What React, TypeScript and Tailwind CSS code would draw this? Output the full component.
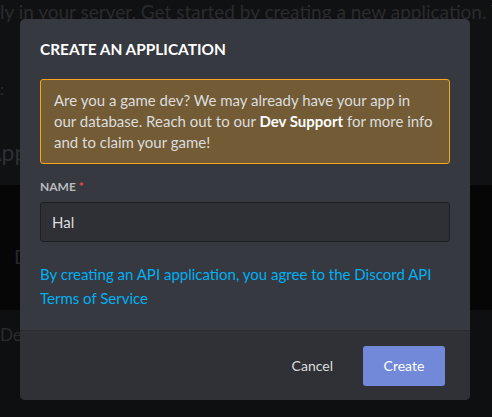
export default function App() {
  return (
    <div
      className="relative h-[417px] w-[492px] overflow-hidden bg-[#0c0d0f]"
      style={{ fontFamily: 'Lato, "Noto Sans", sans-serif' }}
    >
      {/* dimmed page behind the modal */}
      <div className="absolute inset-0 flex flex-col text-[#2a2b2e]">
        <div className="h-[185px] bg-[#101113]">
          <p className="-mt-[2px] whitespace-nowrap text-[19px]">
            ly in your server. Get started by creating a new application. T
          </p>
          <p className="mt-[50px] text-[16px]">:</p>
          <p className="-ml-[14px] mt-[34px] text-[23px] text-[#2e2f33]">App</p>
        </div>
        <div className="h-[125px] bg-[#060606] pl-[14px] pt-[56px] text-[20px] text-[#26272a]">D</div>
        <div className="flex-1 bg-[#0e0f11] pt-[12px] text-[17px] text-[#2a2b2e]">Del</div>
      </div>

      {/* modal */}
      <div className="absolute left-[20px] top-[19px] flex w-[450px] flex-col overflow-hidden rounded-[5px] bg-[#36393f]">
        <div className="flex flex-col px-[20px] pb-[20px] pt-[20px]">
          <h2 className="text-[15.4px] font-bold uppercase leading-[20px] text-white">
            Create an Application
          </h2>
          <div className="mt-[20px] rounded-[3px] border border-[#faa61a] bg-[#725b35] px-[13px] pb-[10px] pt-[10px] text-[15px] leading-[21px] text-[#dcddde]">
            Are you a game dev? We may already have your app in our database. Reach out to our{' '}
            <span className="font-bold text-white">Dev Support</span> for more info and to claim your game!
          </div>
          <label className="mt-[15px] text-[12px] font-bold uppercase leading-[16px] text-[#b9bbbe]">
            Name<span className="ml-[3px] text-[#f04747]">*</span>
          </label>
          <div className="mt-[7px] flex h-[40px] items-center rounded-[3px] border border-[#1e1f23] bg-[#2e3035] px-[11px] text-[15px] text-[#dcddde]">
            Hal
          </div>
          <p className="mt-[20px] text-[15px] leading-[24px] text-[#00b0f4]">
            By creating an API application, you agree to the Discord API Terms of Service
          </p>
        </div>
        <div className="flex h-[70px] items-center justify-end gap-[30px] border-t border-[#2a2c30] bg-[#2f3136] pr-[25px]">
          <button className="text-[14px] text-[#dcddde]">Cancel</button>
          <button className="h-[40px] w-[82px] rounded-[3px] bg-[#7289da] text-[14px] text-white">
            Create
          </button>
        </div>
      </div>
    </div>
  );
}
